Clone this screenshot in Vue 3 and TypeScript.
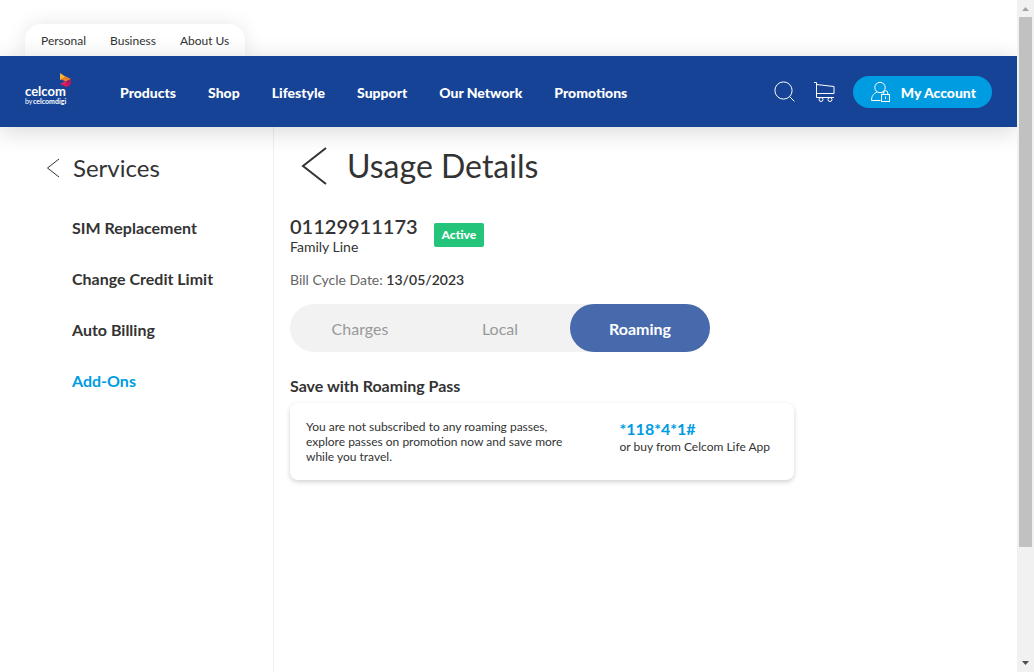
<script setup lang="ts">
import { ref } from 'vue'

const segments: string[] = ['Personal', 'Business', 'About Us']
const navigation: string[] = ['Products', 'Shop', 'Lifestyle', 'Support', 'Our Network', 'Promotions']
const services: string[] = ['SIM Replacement', 'Change Credit Limit', 'Auto Billing', 'Add-Ons']
const tabs: string[] = ['Charges', 'Local', 'Roaming']

const activeService = ref('Add-Ons')
const activeTab = ref('Roaming')
</script>

<template>
  <div class="shell">
    <div class="page">
      <header class="header">
        <nav class="segments" aria-label="Segments">
          <a v-for="item in segments" :key="item" href="#">{{ item }}</a>
        </nav>
        <div class="bar">
          <a class="logo" href="#" aria-label="celcom by celcomdigi">
            <svg viewBox="0 0 48 39" width="48" height="39" aria-hidden="true">
              <path d="M35 1 41 5 35 8Z" fill="#f9b233" />
              <path d="M36 7.5 41 4.5 46 7 41 9.5Z" fill="#f07d22" />
              <path d="M41 9.5 46 7V12.5L41 15Z" fill="#a51b5d" />
              <path d="M35 12 41 9V12Z" fill="#ed2e78" />
              <path d="M35 12 41 11 45 12.8 41 15Z" fill="#d9145c" />
              <text class="logo-name" x="0" y="24">celcom</text>
              <text class="logo-by" x="0" y="32">by</text>
              <text class="logo-group" x="8" y="32">celcomdigi</text>
            </svg>
          </a>
          <nav class="main-nav" aria-label="Main">
            <a v-for="item in navigation" :key="item" href="#">{{ item }}</a>
          </nav>
          <div class="actions">
            <button class="icon-button" type="button" aria-label="Search">
              <svg viewBox="0 0 24 24" width="24" height="24" aria-hidden="true">
                <circle cx="10.5" cy="10.5" r="8.6" />
                <path d="M16.5 16.5 21.4 21.4" />
              </svg>
            </button>
            <button class="icon-button" type="button" aria-label="Cart">
              <svg viewBox="0 0 24 24" width="24" height="24" aria-hidden="true">
                <path d="M1 2.5H3.5V17.5H21M3.5 4.5 21 6.5V13.5H3.5" />
                <circle cx="8" cy="19.5" r="2" />
                <circle cx="17" cy="19.5" r="2" />
              </svg>
            </button>
            <button class="account" type="button">
              <svg viewBox="0 0 24 24" width="24" height="24" aria-hidden="true">
                <circle cx="11" cy="7.5" r="5.2" />
                <path d="M8 12C4 14 2.5 16.5 2.5 20.5H11.5M14 12 15.5 12.8" />
                <rect x="12.5" y="14.5" width="8" height="7" />
                <path d="M14.2 14.5V13A2.3 2.3 0 0 1 18.8 13V14.5M16.5 16.5V19" />
              </svg>
              <span>My Account</span>
            </button>
          </div>
        </div>
      </header>

      <div class="body">
        <aside class="sidebar">
          <a class="side-title" href="#">
            <svg viewBox="0 0 14 20" width="14" height="20" aria-hidden="true">
              <path d="M13 1 1.5 10 13 19" />
            </svg>
            <span>Services</span>
          </a>
          <nav class="side-nav" aria-label="Services">
            <a
              v-for="item in services"
              :key="item"
              href="#"
              :class="{ current: item === activeService }"
              @click.prevent="activeService = item"
            >{{ item }}</a>
          </nav>
        </aside>

        <main class="content">
          <div class="heading">
            <button class="back" type="button" aria-label="Back">
              <svg viewBox="0 0 26 40" width="26" height="40" aria-hidden="true">
                <path d="M25 2 2 20 25 38" />
              </svg>
            </button>
            <h1>Usage Details</h1>
          </div>

          <div class="line">
            <div>
              <p class="number">01129911173</p>
              <p class="plan">Family Line</p>
            </div>
            <span class="badge">Active</span>
          </div>

          <p class="cycle">Bill Cycle Date: <strong>13/05/2023</strong></p>

          <div class="tabs" role="tablist">
            <button
              v-for="tab in tabs"
              :key="tab"
              type="button"
              role="tab"
              :aria-selected="tab === activeTab"
              :class="{ selected: tab === activeTab }"
              @click="activeTab = tab"
            >{{ tab }}</button>
          </div>

          <h2>Save with Roaming Pass</h2>
          <section class="card">
            <p class="message">You are not subscribed to any roaming passes, explore passes on promotion now and save more while you travel.</p>
            <div class="dial">
              <p class="code">*118*4*1#</p>
              <p>or buy from Celcom Life App</p>
            </div>
          </section>
        </main>
      </div>
    </div>

    <div class="scrollbar" aria-hidden="true">
      <svg viewBox="0 0 17 17" width="17" height="17"><path d="M5 11H12L8.5 7Z" fill="#a3a3a3" /></svg>
      <div class="track"><div class="thumb"></div></div>
      <svg viewBox="0 0 17 17" width="17" height="17"><path d="M5 6H12L8.5 10Z" fill="#505050" /></svg>
    </div>
  </div>
</template>

<style>
body {
  margin: 0;
  background: #fff;
}
</style>

<style scoped>
.shell {
  display: flex;
  min-height: 100vh;
  font-family: Lato, "Open Sans", sans-serif;
  color: #333;
}
.page {
  flex: 1;
  min-width: 0;
  display: flex;
  flex-direction: column;
}
p, h1, h2 {
  margin: 0;
}
a {
  color: inherit;
  text-decoration: none;
}
button {
  border: 0;
  padding: 0;
  background: none;
  font: inherit;
  color: inherit;
  cursor: pointer;
}
svg {
  display: block;
  fill: none;
}
.header {
  position: relative;
  padding-top: 24px;
}
.segments {
  display: flex;
  gap: 24px;
  width: fit-content;
  margin-left: 25px;
  padding: 2px 16px 0;
  border-radius: 16px 16px 0 0;
  box-shadow: 0 0 20px rgba(0, 0, 0, 0.1);
  font-size: 12px;
  line-height: 30px;
}
.bar {
  position: relative;
  display: flex;
  align-items: center;
  height: 71px;
  padding: 0 25px;
  background: #164396;
  color: #fff;
  box-shadow: 0 4px 24px rgba(0, 0, 0, 0.16);
}
.logo {
  margin-right: 47px;
}
.logo text {
  fill: #fff;
}
.logo-name {
  font-size: 13px;
  font-weight: 700;
}
.logo-by,
.logo-group {
  font-size: 7px;
}
.logo-group {
  font-weight: 700;
}
.main-nav {
  display: flex;
  gap: 32px;
  padding-top: 2px;
  font-size: 14px;
  line-height: 20px;
  font-weight: 900;
  white-space: nowrap;
}
.actions {
  display: flex;
  align-items: center;
  gap: 16px;
  margin-left: auto;
}
.icon-button svg,
.account svg {
  stroke: #fff;
  stroke-width: 1;
}
.account {
  display: flex;
  align-items: center;
  gap: 8px;
  height: 32px;
  padding: 0 16px;
  border-radius: 16px;
  background: #009ce2;
  font-size: 14px;
  font-weight: 900;
}
.account span {
  padding-top: 2px;
}
.body {
  flex: 1;
  display: flex;
}
.sidebar {
  box-sizing: border-box;
  width: 274px;
  padding: 23px 16px 24px 46px;
  border-right: 1px solid #eee;
}
.side-title {
  display: flex;
  align-items: center;
  gap: 13px;
  font-size: 24px;
  line-height: 36px;
}
.side-title svg {
  stroke: #333;
  stroke-width: 1;
}
.side-nav {
  display: flex;
  flex-direction: column;
  gap: 27px;
  margin: 30px 0 0 26px;
  font-size: 16px;
  line-height: 24px;
  font-weight: 700;
}
.current {
  color: #009ce2;
}
.content {
  flex: 1;
  min-width: 0;
  padding: 15px 16px 24px;
}
.heading {
  display: flex;
  align-items: center;
  gap: 20px;
  padding-left: 11px;
}
.back svg {
  stroke: #333;
  stroke-width: 2;
}
h1 {
  font-size: 32px;
  line-height: 48px;
  font-weight: 400;
}
.line {
  display: flex;
  align-items: flex-end;
  gap: 16px;
  margin-top: 23px;
}
.number {
  font-size: 20px;
  line-height: 26px;
  font-weight: 600;
}
.plan {
  font-size: 14px;
  line-height: 16px;
}
.badge {
  margin-bottom: 8px;
  padding: 0 8px;
  border-radius: 2px;
  background: #24c57a;
  color: #fff;
  font-size: 12px;
  line-height: 24px;
  font-weight: 900;
}
.cycle {
  margin-top: 15px;
  font-size: 14px;
  line-height: 20px;
  color: #666;
}
.cycle strong {
  color: #333;
  font-weight: 600;
}
.tabs {
  display: flex;
  max-width: 420px;
  margin-top: 14px;
  border-radius: 24px;
  background: #f2f2f2;
}
.tabs button {
  flex: 1;
  border-radius: 24px;
  padding-top: 2px;
  font-size: 16px;
  line-height: 46px;
  color: #999;
}
.tabs .selected {
  background: #466aac;
  color: #fff;
  font-weight: 700;
}
h2 {
  margin-top: 24px;
  font-size: 16px;
  line-height: 20px;
  font-weight: 700;
}
.card {
  box-sizing: border-box;
  display: flex;
  justify-content: space-between;
  gap: 24px;
  max-width: 504px;
  margin-top: 7px;
  padding: 16px 24px 16px 16px;
  border-radius: 8px;
  box-shadow: 0 2px 5px rgba(0, 0, 0, 0.18);
  font-size: 12px;
  line-height: 15px;
}
.message {
  max-width: 260px;
}
.code {
  font-size: 16px;
  line-height: 20px;
  font-weight: 700;
  color: #009ce2;
}
.scrollbar {
  position: sticky;
  top: 0;
  display: flex;
  flex-direction: column;
  width: 17px;
  height: 100vh;
  background: #f1f1f1;
}
.track {
  flex: 1;
  padding: 0 2px;
}
.thumb {
  height: 83%;
  background: #c1c1c1;
}
</style>
